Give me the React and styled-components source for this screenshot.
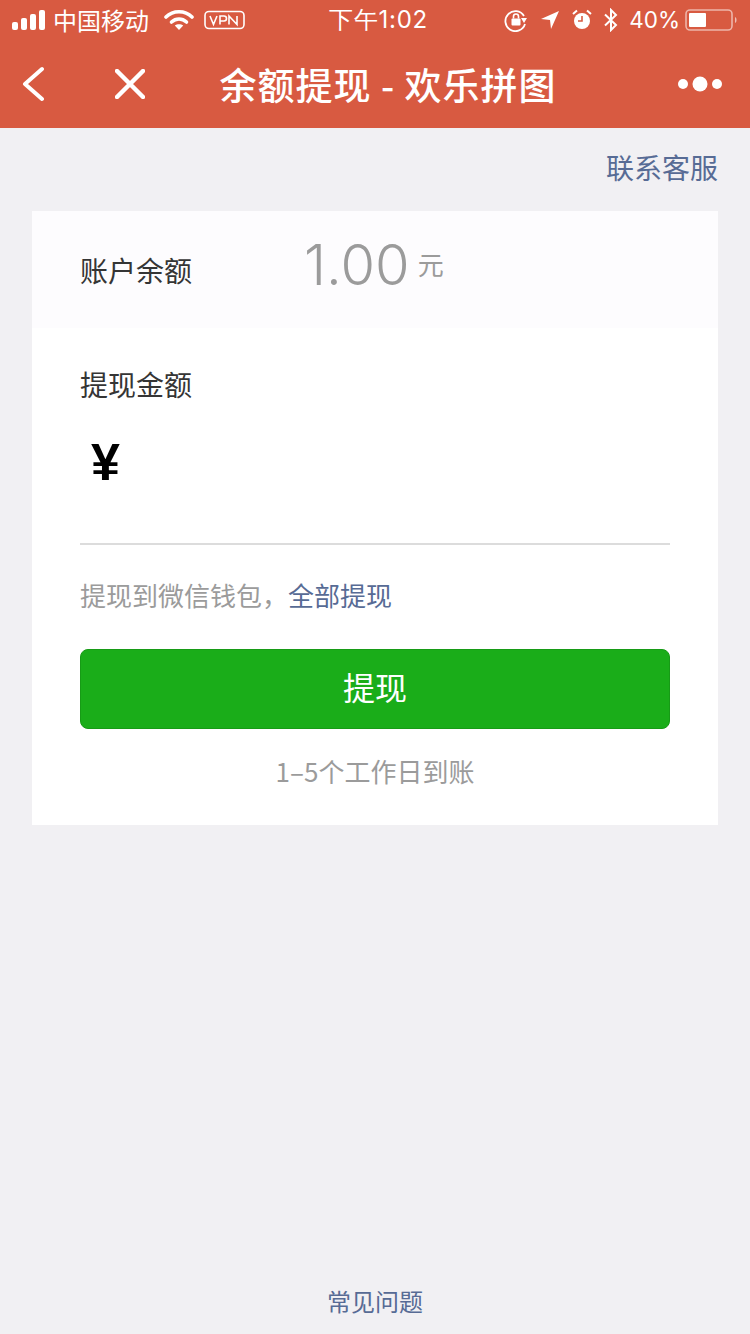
import React from "react";
import styled, { createGlobalStyle } from "styled-components";

const CJK = `"Noto Sans CJK SC", "Noto Sans", sans-serif`;

const Global = createGlobalStyle`
    html, body {
        margin: 0;
        padding: 0;
        background: #f1f0f3;
    }
`;

const Page = styled.div`
    width: 750px;
    height: 1334px;
    display: flex;
    flex-direction: column;
    background: #f1f0f3;
    font-family: ${CJK};
    overflow: hidden;
`;

// Header
const Header = styled.header`
    height: 128px;
    background: #d85a41;
    color: #fff;
    flex-shrink: 0;
`;

const StatusBar = styled.div`
    height: 40px;
    display: grid;
    grid-template-columns: 1fr auto 1fr;
    align-items: center;
    padding: 0 11px 0 12px;
    font-size: 24px;
    line-height: 40px;
`;

const StatusLeft = styled.div`
    display: flex;
    align-items: center;
`;

const StatusRight = styled.div`
    display: flex;
    align-items: center;
    justify-content: flex-end;
`;

const Carrier = styled.span`
    margin: 0 15px 0 5px;
    font-size: 24px;
`;

const Clock = styled.span`
    font-family: "Inter", sans-serif;
    font-size: 24px;
    letter-spacing: 0.7px;
    margin-left: 6px;
`;

const Percent = styled.span`
    font-family: "Inter", sans-serif;
    font-size: 22.5px;
    margin: 0 5px 0 10px;
`;

const NavBar = styled.div`
    height: 88px;
    display: flex;
    align-items: center;
    padding: 0 27px 0 22px;
`;

const NavTitle = styled.div`
    flex: 1;
    text-align: center;
    font-size: 37px;
    font-weight: 500;
    letter-spacing: 1px;
    margin-left: -46px;
`;

const NavIcon = styled.svg`
    display: block;
    flex-shrink: 0;
    margin-left: ${p => p.$left || 0}px;
`;

const StatusIcon = styled.svg`
    display: block;
    flex-shrink: 0;
    margin-left: ${p => p.$left || 0}px;
`;

// Content
const ServiceLink = styled.div`
    height: 83px;
    box-sizing: border-box;
    display: flex;
    align-items: center;
    justify-content: flex-end;
    padding: 0 32px 6px 0;
    font-size: 28px;
    color: #576b95;
`;

const Card = styled.main`
    margin: 0 32px;
    background: #fff;
    height: 614px;
`;

const BalanceRow = styled.div`
    height: 117px;
    box-sizing: border-box;
    background: #fdfcfe;
    display: flex;
    align-items: center;
    padding: 1px 0 0 48px;
`;

const Label = styled.div`
    font-size: 28px;
    color: #353535;
    line-height: 40px;
`;

const BalanceValue = styled.div`
    margin-left: 112px;
    display: flex;
    align-items: center;
    color: #9b9b9b;
    margin-top: -10px;
`;

const Amount = styled.span`
    font-family: "Inter", sans-serif;
    font-size: 56px;
    font-weight: 300;
`;

const Unit = styled.span`
    font-size: 26px;
    margin: 0 0 4px 8px;
`;

const WithdrawForm = styled.div`
    padding: 36px 48px 0;
`;

const AmountInput = styled.div`
    height: 141px;
    border-bottom: 2px solid #dcdcdc;
    box-sizing: border-box;
    padding: 23px 0 0 11px;
    font-family: "Liberation Sans", sans-serif;
    font-weight: 700;
    font-size: 52px;
    line-height: 70px;
    color: #000;
`;

const Hint = styled.div`
    margin-top: 30px;
    font-size: 26px;
    line-height: 40px;
    color: #9b9b9b;
`;

const HintLink = styled.span`
    color: #576b95;
`;

const SubmitButton = styled.button`
    display: block;
    width: 100%;
    height: 80px;
    margin-top: 34px;
    border: 1px solid #179b16;
    border-radius: 8px;
    background: #1aad19;
    color: #fff;
    font-family: ${CJK};
    font-size: 32px;
    padding: 0 0 7px;
`;

const ArrivalNote = styled.div`
    margin-top: 22px;
    text-align: center;
    font-size: 26px;
    line-height: 40px;
    color: #9b9b9b;
`;

const Footer = styled.div`
    margin-top: auto;
    height: 66px;
    text-align: center;
    font-size: 24px;
    color: #576b95;
    line-height: 66px;
`;

function App() {
    return (
        <Page>
            <Global />
            <Header>
                <StatusBar>
                    <StatusLeft>
                        <StatusIcon width="36" height="20" viewBox="0 0 36 20" fill="#fff">
                            <rect x="0" y="12" width="6" height="8" rx="2" />
                            <rect x="9" y="8" width="6" height="12" rx="2" />
                            <rect x="18" y="4" width="6" height="16" rx="2" />
                            <rect x="27" y="0" width="6" height="20" rx="2" />
                        </StatusIcon>
                        <Carrier>中国移动</Carrier>
                        <StatusIcon width="30" height="22" viewBox="0 0 30 22">
                            <path d="M2 8 C9 1 21 1 28 8" fill="none" stroke="#fff" strokeWidth="3.6" strokeLinecap="round" />
                            <path d="M7.5 13 C12 9 18 9 22.5 13" fill="none" stroke="#fff" strokeWidth="3.6" strokeLinecap="round" />
                            <path d="M15 21 L10.8 16.4 C13 14.8 17 14.8 19.2 16.4 Z" fill="#fff" />
                        </StatusIcon>
                        <StatusIcon $left={10} width="42" height="20" viewBox="0 0 42 20">
                            <rect x="1" y="1.5" width="39" height="17" rx="4" fill="none" stroke="#fff" strokeWidth="1.6" />
                            <path d="M6 6 L9.5 14.5 L13 6 M16 14.5 V6 H20 A2.4 2.4 0 0 1 20 11 H16 M25 14.5 V6 L33 14.5 V6" fill="none" stroke="#fff" strokeWidth="1.6" />
                        </StatusIcon>
                    </StatusLeft>
                    <Clock>下午1:02</Clock>
                    <StatusRight>
                        <StatusIcon width="24" height="24" viewBox="0 0 24 24">
                            <path d="M20 8 A10 10 0 1 0 21 16" fill="none" stroke="#fff" strokeWidth="1.8" />
                            <path d="M17 10 L23 10 L20 15 Z" fill="#fff" />
                            <rect x="7.5" y="10.5" width="9" height="7" rx="1" fill="#fff" />
                            <path d="M9.5 10.5 V8.5 A2.5 2.5 0 0 1 14.5 8.5 V10.5" fill="none" stroke="#fff" strokeWidth="1.6" />
                        </StatusIcon>
                        <StatusIcon $left={12} width="20" height="20" viewBox="0 0 20 20">
                            <path d="M19 1 L1 9 L10 10 L11 19 Z" fill="#fff" />
                        </StatusIcon>
                        <StatusIcon $left={12} width="20" height="22" viewBox="0 0 20 22">
                            <circle cx="10" cy="12" r="8" fill="#fff" />
                            <path d="M10 7 V12 H6" fill="none" stroke="#d85a41" strokeWidth="1.6" />
                            <path d="M1 5 L5 1.5 M19 5 L15 1.5" stroke="#fff" strokeWidth="2" />
                        </StatusIcon>
                        <StatusIcon $left={11} width="16" height="24" viewBox="0 0 16 24">
                            <path d="M2 6.5 L13 17 L8 22 V2 L13 7 L2 17.5" fill="none" stroke="#fff" strokeWidth="2" />
                        </StatusIcon>
                        <Percent>40%</Percent>
                        <StatusIcon width="54" height="22" viewBox="0 0 54 22">
                            <rect x="1" y="1" width="46" height="20" rx="4" fill="none" stroke="#fff" strokeOpacity="0.55" strokeWidth="1.6" />
                            <rect x="4" y="4" width="17" height="14" rx="1" fill="#fff" />
                            <path d="M50 8 C52 8.5 52 13.5 50 14 Z" fill="#fff" fillOpacity="0.6" />
                        </StatusIcon>
                    </StatusRight>
                </StatusBar>
                <NavBar>
                    <NavIcon width="22" height="36" viewBox="0 0 22 36">
                        <path d="M20 3 L3 18 L20 33" fill="none" stroke="#fff" strokeWidth="4" strokeLinecap="round" strokeLinejoin="round" />
                    </NavIcon>
                    <NavIcon $left={71} width="30" height="30" viewBox="0 0 30 30">
                        <path d="M2 2 L28 28 M28 2 L2 28" fill="none" stroke="#fff" strokeWidth="4.5" strokeLinecap="round" />
                    </NavIcon>
                    <NavTitle>余额提现 - 欢乐拼图</NavTitle>
                    <NavIcon width="46" height="20" viewBox="0 0 46 20" fill="#fff">
                        <circle cx="6" cy="10" r="5" />
                        <circle cx="23" cy="10" r="7.5" />
                        <circle cx="40" cy="10" r="5" />
                    </NavIcon>
                </NavBar>
            </Header>
            <ServiceLink>联系客服</ServiceLink>
            <Card>
                <BalanceRow>
                    <Label>账户余额</Label>
                    <BalanceValue>
                        <Amount>1.00</Amount>
                        <Unit>元</Unit>
                    </BalanceValue>
                </BalanceRow>
                <WithdrawForm>
                    <Label>提现金额</Label>
                    <AmountInput>¥</AmountInput>
                    <Hint>提现到微信钱包，<HintLink>全部提现</HintLink></Hint>
                    <SubmitButton>提现</SubmitButton>
                    <ArrivalNote>1–5个工作日到账</ArrivalNote>
                </WithdrawForm>
            </Card>
            <Footer>常见问题</Footer>
        </Page>
    );
}

export default App;
